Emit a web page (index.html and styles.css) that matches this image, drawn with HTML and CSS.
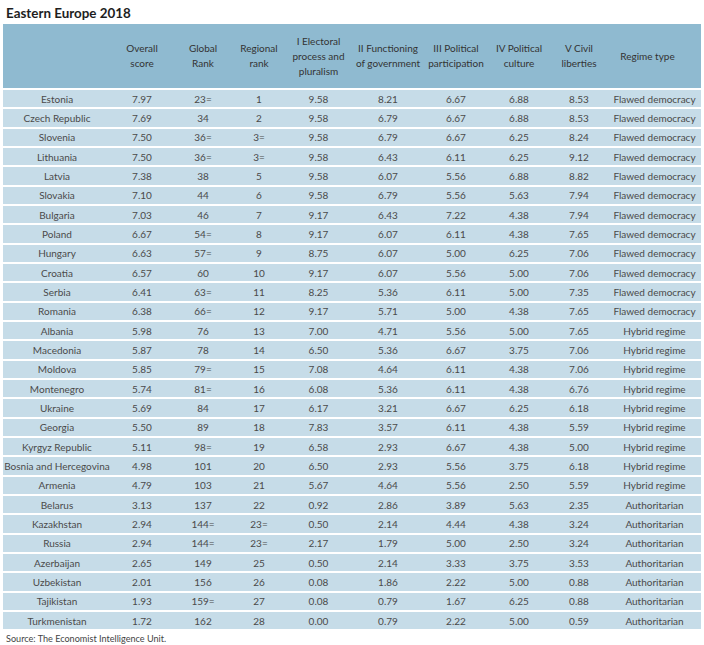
FILE: index.html
```html
<!DOCTYPE html>
<html>
<head>
<meta charset="utf-8">
<link rel="stylesheet" href="styles.css">
</head>
<body>
<div class="page">
  <h1 class="title">Eastern Europe 2018</h1>
  <div class="table">
    <div class="row head">
      <div class="c"></div>
      <div class="c">Overall<br>score</div>
      <div class="c">Global<br>Rank</div>
      <div class="c">Regional<br>rank</div>
      <div class="c">I Electoral<br>process and<br>pluralism</div>
      <div class="c">II Functioning<br>of government</div>
      <div class="c">III Political<br>participation</div>
      <div class="c">IV Political<br>culture</div>
      <div class="c">V Civil<br>liberties</div>
      <div class="c regime-h">Regime type</div>
    </div>
    <div class="row"><div class="c">Estonia</div><div class="c">7.97</div><div class="c">23=</div><div class="c">1</div><div class="c">9.58</div><div class="c">8.21</div><div class="c">6.67</div><div class="c">6.88</div><div class="c">8.53</div><div class="c">Flawed democracy</div></div>
    <div class="row"><div class="c">Czech Republic</div><div class="c">7.69</div><div class="c">34</div><div class="c">2</div><div class="c">9.58</div><div class="c">6.79</div><div class="c">6.67</div><div class="c">6.88</div><div class="c">8.53</div><div class="c">Flawed democracy</div></div>
    <div class="row"><div class="c">Slovenia</div><div class="c">7.50</div><div class="c">36=</div><div class="c">3=</div><div class="c">9.58</div><div class="c">6.79</div><div class="c">6.67</div><div class="c">6.25</div><div class="c">8.24</div><div class="c">Flawed democracy</div></div>
    <div class="row"><div class="c">Lithuania</div><div class="c">7.50</div><div class="c">36=</div><div class="c">3=</div><div class="c">9.58</div><div class="c">6.43</div><div class="c">6.11</div><div class="c">6.25</div><div class="c">9.12</div><div class="c">Flawed democracy</div></div>
    <div class="row"><div class="c">Latvia</div><div class="c">7.38</div><div class="c">38</div><div class="c">5</div><div class="c">9.58</div><div class="c">6.07</div><div class="c">5.56</div><div class="c">6.88</div><div class="c">8.82</div><div class="c">Flawed democracy</div></div>
    <div class="row"><div class="c">Slovakia</div><div class="c">7.10</div><div class="c">44</div><div class="c">6</div><div class="c">9.58</div><div class="c">6.79</div><div class="c">5.56</div><div class="c">5.63</div><div class="c">7.94</div><div class="c">Flawed democracy</div></div>
    <div class="row"><div class="c">Bulgaria</div><div class="c">7.03</div><div class="c">46</div><div class="c">7</div><div class="c">9.17</div><div class="c">6.43</div><div class="c">7.22</div><div class="c">4.38</div><div class="c">7.94</div><div class="c">Flawed democracy</div></div>
    <div class="row"><div class="c">Poland</div><div class="c">6.67</div><div class="c">54=</div><div class="c">8</div><div class="c">9.17</div><div class="c">6.07</div><div class="c">6.11</div><div class="c">4.38</div><div class="c">7.65</div><div class="c">Flawed democracy</div></div>
    <div class="row"><div class="c">Hungary</div><div class="c">6.63</div><div class="c">57=</div><div class="c">9</div><div class="c">8.75</div><div class="c">6.07</div><div class="c">5.00</div><div class="c">6.25</div><div class="c">7.06</div><div class="c">Flawed democracy</div></div>
    <div class="row"><div class="c">Croatia</div><div class="c">6.57</div><div class="c">60</div><div class="c">10</div><div class="c">9.17</div><div class="c">6.07</div><div class="c">5.56</div><div class="c">5.00</div><div class="c">7.06</div><div class="c">Flawed democracy</div></div>
    <div class="row"><div class="c">Serbia</div><div class="c">6.41</div><div class="c">63=</div><div class="c">11</div><div class="c">8.25</div><div class="c">5.36</div><div class="c">6.11</div><div class="c">5.00</div><div class="c">7.35</div><div class="c">Flawed democracy</div></div>
    <div class="row"><div class="c">Romania</div><div class="c">6.38</div><div class="c">66=</div><div class="c">12</div><div class="c">9.17</div><div class="c">5.71</div><div class="c">5.00</div><div class="c">4.38</div><div class="c">7.65</div><div class="c">Flawed democracy</div></div>
    <div class="row"><div class="c">Albania</div><div class="c">5.98</div><div class="c">76</div><div class="c">13</div><div class="c">7.00</div><div class="c">4.71</div><div class="c">5.56</div><div class="c">5.00</div><div class="c">7.65</div><div class="c">Hybrid regime</div></div>
    <div class="row"><div class="c">Macedonia</div><div class="c">5.87</div><div class="c">78</div><div class="c">14</div><div class="c">6.50</div><div class="c">5.36</div><div class="c">6.67</div><div class="c">3.75</div><div class="c">7.06</div><div class="c">Hybrid regime</div></div>
    <div class="row"><div class="c">Moldova</div><div class="c">5.85</div><div class="c">79=</div><div class="c">15</div><div class="c">7.08</div><div class="c">4.64</div><div class="c">6.11</div><div class="c">4.38</div><div class="c">7.06</div><div class="c">Hybrid regime</div></div>
    <div class="row"><div class="c">Montenegro</div><div class="c">5.74</div><div class="c">81=</div><div class="c">16</div><div class="c">6.08</div><div class="c">5.36</div><div class="c">6.11</div><div class="c">4.38</div><div class="c">6.76</div><div class="c">Hybrid regime</div></div>
    <div class="row"><div class="c">Ukraine</div><div class="c">5.69</div><div class="c">84</div><div class="c">17</div><div class="c">6.17</div><div class="c">3.21</div><div class="c">6.67</div><div class="c">6.25</div><div class="c">6.18</div><div class="c">Hybrid regime</div></div>
    <div class="row"><div class="c">Georgia</div><div class="c">5.50</div><div class="c">89</div><div class="c">18</div><div class="c">7.83</div><div class="c">3.57</div><div class="c">6.11</div><div class="c">4.38</div><div class="c">5.59</div><div class="c">Hybrid regime</div></div>
    <div class="row"><div class="c">Kyrgyz Republic</div><div class="c">5.11</div><div class="c">98=</div><div class="c">19</div><div class="c">6.58</div><div class="c">2.93</div><div class="c">6.67</div><div class="c">4.38</div><div class="c">5.00</div><div class="c">Hybrid regime</div></div>
    <div class="row"><div class="c">Bosnia and Hercegovina</div><div class="c">4.98</div><div class="c">101</div><div class="c">20</div><div class="c">6.50</div><div class="c">2.93</div><div class="c">5.56</div><div class="c">3.75</div><div class="c">6.18</div><div class="c">Hybrid regime</div></div>
    <div class="row"><div class="c">Armenia</div><div class="c">4.79</div><div class="c">103</div><div class="c">21</div><div class="c">5.67</div><div class="c">4.64</div><div class="c">5.56</div><div class="c">2.50</div><div class="c">5.59</div><div class="c">Hybrid regime</div></div>
    <div class="row"><div class="c">Belarus</div><div class="c">3.13</div><div class="c">137</div><div class="c">22</div><div class="c">0.92</div><div class="c">2.86</div><div class="c">3.89</div><div class="c">5.63</div><div class="c">2.35</div><div class="c">Authoritarian</div></div>
    <div class="row"><div class="c">Kazakhstan</div><div class="c">2.94</div><div class="c">144=</div><div class="c">23=</div><div class="c">0.50</div><div class="c">2.14</div><div class="c">4.44</div><div class="c">4.38</div><div class="c">3.24</div><div class="c">Authoritarian</div></div>
    <div class="row"><div class="c">Russia</div><div class="c">2.94</div><div class="c">144=</div><div class="c">23=</div><div class="c">2.17</div><div class="c">1.79</div><div class="c">5.00</div><div class="c">2.50</div><div class="c">3.24</div><div class="c">Authoritarian</div></div>
    <div class="row"><div class="c">Azerbaijan</div><div class="c">2.65</div><div class="c">149</div><div class="c">25</div><div class="c">0.50</div><div class="c">2.14</div><div class="c">3.33</div><div class="c">3.75</div><div class="c">3.53</div><div class="c">Authoritarian</div></div>
    <div class="row"><div class="c">Uzbekistan</div><div class="c">2.01</div><div class="c">156</div><div class="c">26</div><div class="c">0.08</div><div class="c">1.86</div><div class="c">2.22</div><div class="c">5.00</div><div class="c">0.88</div><div class="c">Authoritarian</div></div>
    <div class="row"><div class="c">Tajikistan</div><div class="c">1.93</div><div class="c">159=</div><div class="c">27</div><div class="c">0.08</div><div class="c">0.79</div><div class="c">1.67</div><div class="c">6.25</div><div class="c">0.88</div><div class="c">Authoritarian</div></div>
    <div class="row"><div class="c">Turkmenistan</div><div class="c">1.72</div><div class="c">162</div><div class="c">28</div><div class="c">0.00</div><div class="c">0.79</div><div class="c">2.22</div><div class="c">5.00</div><div class="c">0.59</div><div class="c">Authoritarian</div></div>
  </div>
  <p class="source">Source: The Economist Intelligence Unit.</p>
</div>
</body>
</html>
```

FILE: styles.css
```css
html, body {
  margin: 0;
  padding: 0;
  background: #ffffff;
}

.page {
  width: 698px;
  padding: 0 3px;
  font-family: "Lato", "Open Sans", sans-serif;
  color: #4a4a4a;
}

.title {
  margin: 0;
  height: 24px;
  padding: 5px 0 0 3px;
  box-sizing: border-box;
  font-size: 13.4px;
  line-height: 16px;
  font-weight: 700;
  color: #1e1e1e;
}

.table {
  display: flex;
  flex-direction: column;
}

.row {
  display: grid;
  grid-template-columns: 108px 62px 60px 52px 67px 72px 64px 62px 58px 93px;
  align-items: center;
  height: 17.34px;
  margin-top: 2px;
  background: #c6dce8;
  font-size: 10px;
  line-height: 14px;
}

.row.head {
  height: 64px;
  margin-top: 0;
  background: #8fbad0;
  line-height: 15px;
  color: #333333;
}

.c {
  text-align: center;
  white-space: nowrap;
}

.regime-h {
  padding-right: 14px;
}

.source {
  margin: 0;
  padding: 4px 0 0 3px;
  font-size: 9.1px;
  line-height: 12px;
  color: #444444;
}
```
